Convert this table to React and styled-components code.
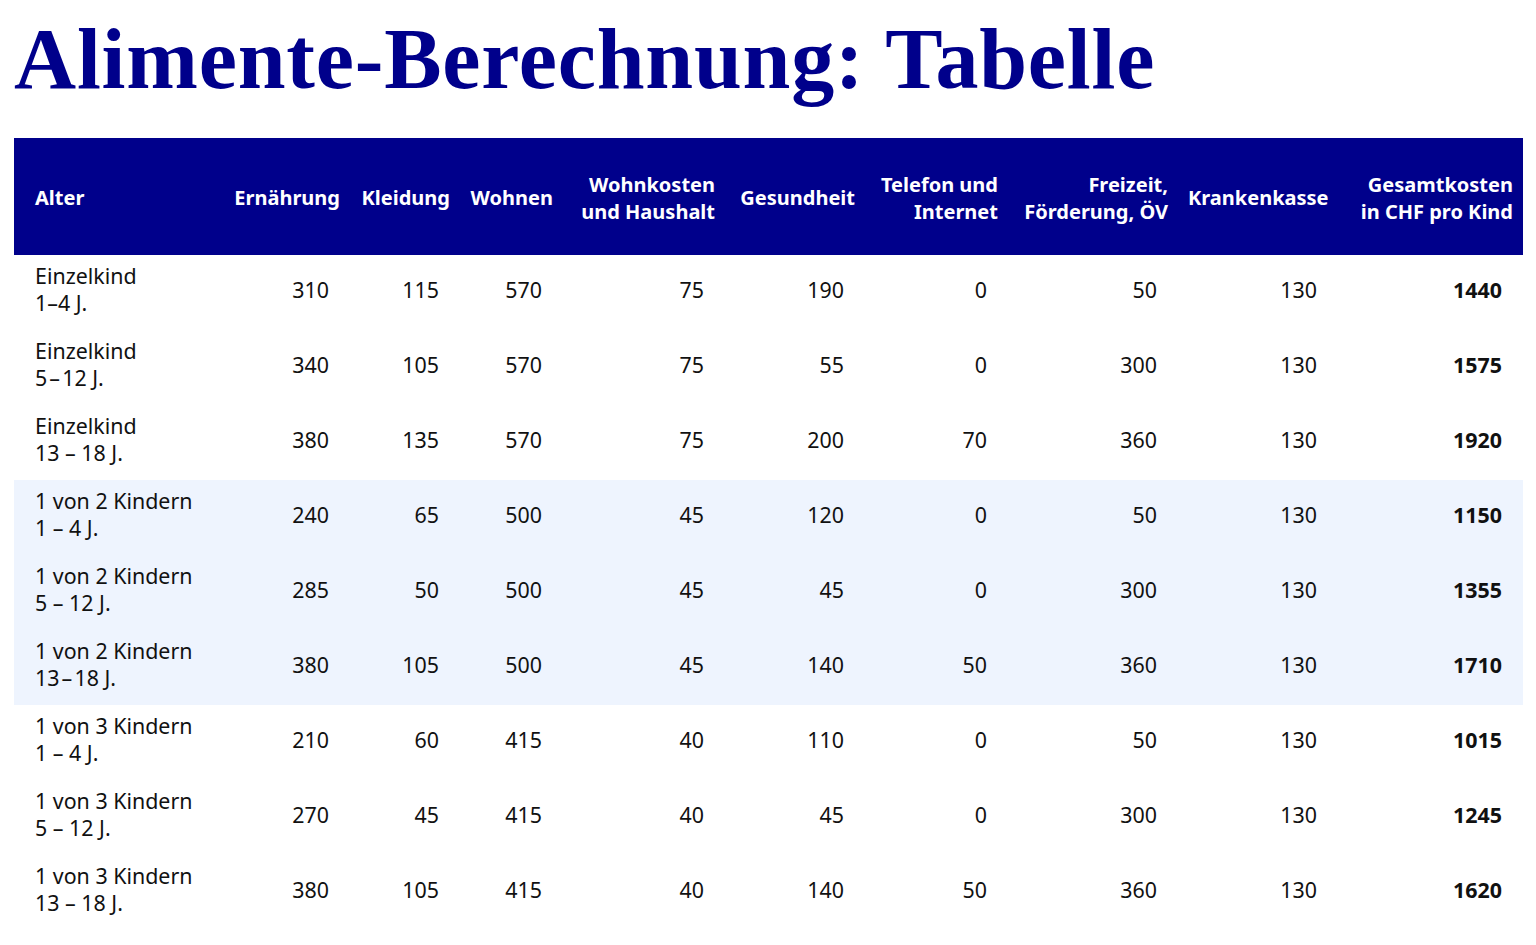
import React from "react";
import styled, { createGlobalStyle } from "styled-components";

const Global = createGlobalStyle`
  html, body { margin: 0; padding: 0; background: #ffffff; }
  body { font-family: "Noto Sans", Lato, sans-serif; color: #111111; }
`;

const Page = styled.div`
  padding: 0 13px 20px 14px;
`;

const Title = styled.h1`
  margin: 17px 0 37px;
  font-family: "Liberation Serif", "Times New Roman", serif;
  font-weight: 700;
  font-size: 86px;
  line-height: 84px;
  color: #00008b;
  letter-spacing: 0.8px;
  white-space: nowrap;
`;

const Table = styled.table`
  width: 1509px;
  border-collapse: collapse;
  table-layout: fixed;
`;

const HeadCell = styled.th`
  height: 117px;
  box-sizing: border-box;
  padding: 2px 10px 0 ${(p) => (p.$first ? "21px" : "10px")};
  background: #00008b;
  color: #ffffff;
  font-family: "Noto Sans", Lato, sans-serif;
  font-weight: 700;
  font-size: 20px;
  line-height: 27px;
  text-align: ${(p) => (p.$first ? "left" : "right")};
  vertical-align: middle;
`;

const Row = styled.tr`
  background: ${(p) => (p.$shaded ? "#eef4fe" : "#ffffff")};
`;

const Cell = styled.td`
  height: 75px;
  box-sizing: border-box;
  padding: 0 ${(p) => (p.$first ? "0" : "21px")} 7px ${(p) => (p.$first ? "21px" : "0")};
  font-family: "Noto Sans", Lato, sans-serif;
  font-size: 21.4px;
  line-height: 27px;
  font-weight: ${(p) => (p.$bold ? 700 : 400)};
  text-align: ${(p) => (p.$first ? "left" : "right")};
  vertical-align: middle;
  color: #111111;
  white-space: nowrap;
`;

const widths = [210, 126, 110, 103, 162, 140, 143, 170, 160, 185];

const headers = [
  ["Alter"],
  ["Ernährung"],
  ["Kleidung"],
  ["Wohnen"],
  ["Wohnkosten", "und Haushalt"],
  ["Gesundheit"],
  ["Telefon und", "Internet"],
  ["Freizeit,", "Förderung, ÖV"],
  ["Krankenkasse"],
  ["Gesamtkosten", "in CHF pro Kind"],
];

const rows = [
  ["Einzelkind", "1–4 J.", 310, 115, 570, 75, 190, 0, 50, 130, 1440],
  ["Einzelkind", "5\u200a–\u200a12 J.", 340, 105, 570, 75, 55, 0, 300, 130, 1575],
  ["Einzelkind", "13 – 18 J.", 380, 135, 570, 75, 200, 70, 360, 130, 1920],
  ["1 von 2 Kindern", "1 – 4 J.", 240, 65, 500, 45, 120, 0, 50, 130, 1150],
  ["1 von 2 Kindern", "5 – 12 J.", 285, 50, 500, 45, 45, 0, 300, 130, 1355],
  ["1 von 2 Kindern", "13\u200a–\u200a18 J.", 380, 105, 500, 45, 140, 50, 360, 130, 1710],
  ["1 von 3 Kindern", "1 – 4 J.", 210, 60, 415, 40, 110, 0, 50, 130, 1015],
  ["1 von 3 Kindern", "5 – 12 J.", 270, 45, 415, 40, 45, 0, 300, 130, 1245],
  ["1 von 3 Kindern", "13 – 18 J.", 380, 105, 415, 40, 140, 50, 360, 130, 1620],
];

export default function App() {
  return (
    <Page>
      <Global />
      <Title>Alimente-Berechnung: Tabelle</Title>
      <Table>
        <colgroup>
          {widths.map((w, i) => (
            <col key={i} style={{ width: w }} />
          ))}
        </colgroup>
        <thead>
          <tr>
            {headers.map((h, i) => (
              <HeadCell key={i} $first={i === 0}>
                {h.map((line, j) => (
                  <React.Fragment key={j}>
                    {j > 0 && <br />}
                    {line}
                  </React.Fragment>
                ))}
              </HeadCell>
            ))}
          </tr>
        </thead>
        <tbody>
          {rows.map((r, i) => (
            <Row key={i} $shaded={i >= 3 && i <= 5}>
              <Cell $first>
                {r[0]}
                <br />
                {r[1]}
              </Cell>
              {r.slice(2).map((v, j) => (
                <Cell key={j} $bold={j === 8}>
                  {v}
                </Cell>
              ))}
            </Row>
          ))}
        </tbody>
      </Table>
    </Page>
  );
}
